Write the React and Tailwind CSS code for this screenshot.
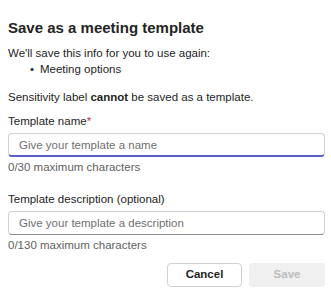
import React from 'react';

const App = () => {
  return (
    <div className="w-[331px] h-[298px] bg-white text-[#242424] font-['Liberation_Sans',Arial,sans-serif] pl-2 pr-[6px] pt-4">
      <h1 className="text-[15px] leading-6 font-bold">Save as a meeting template</h1>

      <div className="mt-[5px] text-[11.5px] leading-4">
        <p>We'll save this info for you to use again:</p>
        <div className="flex pl-[22px]">
          <span className="w-[10px]">•</span>
          <span>Meeting options</span>
        </div>
      </div>

      <p className="mt-3 text-[11.5px] leading-4">
        Sensitivity label <strong className="font-bold">cannot</strong> be saved as a template.
      </p>

      <label className="block mt-2 text-[11.5px] leading-4">
        Template name<span className="text-[#c4314b]">*</span>
      </label>
      <input
        type="text"
        placeholder="Give your template a name"
        className="mt-[4px] w-full h-6 px-2.5 text-[11.5px] rounded-[4px] border border-[#d1d1d1] border-b-2 border-b-[#5b5fc7] outline-none placeholder:text-[#707070]"
      />
      <p className="mt-0.5 text-[11.5px] leading-4 text-[#616161]">0/30 maximum characters</p>

      <label className="block mt-4 text-[11.5px] leading-4">Template description (optional)</label>
      <input
        type="text"
        placeholder="Give your template a description"
        className="mt-1 w-full h-6 px-2.5 text-[11.5px] rounded-[4px] border border-[#d1d1d1] border-b-[#8a8a8a] outline-none placeholder:text-[#707070]"
      />
      <p className="mt-0.5 text-[11.5px] leading-4 text-[#616161]">0/130 maximum characters</p>

      <div className="mt-[10px] flex justify-end gap-[7px]">
        <button className="w-[75px] h-6 rounded-[4px] border border-[#d1d1d1] bg-white text-[11.5px] font-bold text-[#242424]">
          Cancel
        </button>
        <button disabled className="w-[76px] h-6 rounded-[4px] bg-[#f0f0f0] text-[11.5px] font-bold text-[#bdbdbd]">
          Save
        </button>
      </div>
    </div>
  );
};

export default App;
